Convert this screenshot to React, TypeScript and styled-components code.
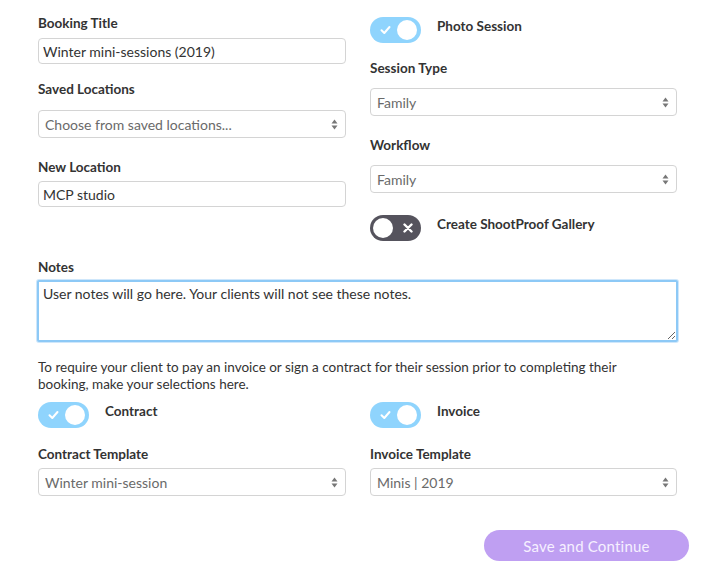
import React from "react";
import styled, { createGlobalStyle } from "styled-components";

const Global = createGlobalStyle`
  html, body { margin: 0; padding: 0; background: #fff; }
  body { font-family: Lato, "Open Sans", sans-serif; color: #333; }
  * { box-sizing: border-box; }
`;

const Page = styled.div`
  width: 715px;
  padding: 15px 38px 0 38px;
`;

const Columns = styled.div`
  display: grid;
  grid-template-columns: 308px 307px;
  column-gap: 24px;
`;

const Column = styled.div`
  display: flex;
  flex-direction: column;
`;

const Label = styled.div<{ $top?: number; $gap?: number }>`
  font-size: 13.5px;
  font-weight: 700;
  line-height: 16px;
  color: #333;
  margin-top: ${(p) => p.$top ?? 0}px;
  margin-bottom: ${(p) => p.$gap ?? 7}px;
`;

const TextInput = styled.input`
  width: 100%;
  height: 26px;
  border: 1px solid #d4d4d4;
  border-radius: 4px;
  padding: 0 4px;
  font-family: inherit;
  font-size: 14px;
  color: #333;
  outline: none;
  background: #fff;
`;

const SelectWrap = styled.div`
  position: relative;
  width: 100%;
`;

const Select = styled.select`
  width: 100%;
  height: 28px;
  appearance: none;
  -webkit-appearance: none;
  border: 1px solid #d4d4d4;
  border-radius: 4px;
  padding: 0 24px 0 6px;
  font-family: inherit;
  font-size: 14px;
  color: #6a6a6a;
  background: #fff;
  outline: none;
`;

const Arrows = styled.svg`
  position: absolute;
  right: 8px;
  top: 9px;
  pointer-events: none;
`;

const SelectBox = ({ value }: { value: string }) => (
  <SelectWrap>
    <Select defaultValue={value}>
      <option>{value}</option>
    </Select>
    <Arrows width="7" height="11" viewBox="0 0 7 11">
      <path d="M3.5 0.5 L6.5 4.5 H0.5 Z" fill="#777" />
      <path d="M3.5 10.5 L6.5 6.5 H0.5 Z" fill="#777" />
    </Arrows>
  </SelectWrap>
);

const ToggleRow = styled.div<{ $top?: number }>`
  display: flex;
  align-items: flex-start;
  gap: 16px;
  margin-top: ${(p) => p.$top ?? 0}px;
`;

const Track = styled.div<{ $on: boolean }>`
  position: relative;
  width: 51px;
  height: 26px;
  border-radius: 13px;
  background: ${(p) => (p.$on ? "#8fd4fd" : "#55535d")};
  flex: none;
`;

const Knob = styled.div<{ $on: boolean }>`
  position: absolute;
  top: 3px;
  left: ${(p) => (p.$on ? "27px" : "3px")};
  width: 20px;
  height: 20px;
  border-radius: 50%;
  background: #fff;
`;

const TrackIcon = styled.svg<{ $on: boolean }>`
  position: absolute;
  top: 8px;
  left: ${(p) => (p.$on ? "10px" : "33px")};
`;

const ToggleText = styled.div`
  font-size: 13.5px;
  font-weight: 700;
  line-height: 16px;
  padding-top: 1px;
  color: #333;
`;

const Toggle = ({ on, label, top }: { on: boolean; label: string; top?: number }) => (
  <ToggleRow $top={top}>
    <Track $on={on}>
      {on ? (
        <TrackIcon $on width="11" height="10" viewBox="0 0 11 10">
          <path d="M1.5 5.2 L4.3 8 L9.5 2" fill="none" stroke="#fff" strokeWidth="2" strokeLinecap="round" strokeLinejoin="round" />
        </TrackIcon>
      ) : (
        <TrackIcon $on={false} width="10" height="10" viewBox="0 0 10 10">
          <path d="M1.5 1.5 L8.5 8.5 M8.5 1.5 L1.5 8.5" stroke="#fff" strokeWidth="2.4" strokeLinecap="round" />
        </TrackIcon>
      )}
      <Knob $on={on} />
    </Track>
    <ToggleText>{label}</ToggleText>
  </ToggleRow>
);

const NotesArea = styled.textarea`
  display: block;
  width: 641px;
  margin-left: -1px;
  height: 62px;
  border: 2px solid #8dc9f6;
  box-shadow: 0 0 0 1px #cfe7fb;
  border-radius: 2px;
  padding: 3px 4px;
  font-family: inherit;
  font-size: 14px;
  color: #333;
  outline: none;
  resize: vertical;
`;

const Info = styled.p`
  margin: 17px 0 0 0;
  font-size: 13.5px;
  line-height: 17px;
  color: #333;
  width: 600px;
`;

const Footer = styled.div`
  display: flex;
  justify-content: flex-end;
  margin-top: 34px;
  margin-right: -12px;
`;

const SaveButton = styled.button`
  width: 205px;
  height: 31px;
  border: none;
  border-radius: 16px;
  background: #bf9ff2;
  color: #f6f0ff;
  font-family: inherit;
  font-size: 15px;
  letter-spacing: 0.2px;
`;

export default function App() {
  return (
    <Page>
      <Global />
      <Columns>
        <Column>
          <Label>Booking Title</Label>
          <TextInput defaultValue="Winter mini-sessions (2019)" />
          <Label $top={17} $gap={13}>Saved Locations</Label>
          <SelectBox value="Choose from saved locations..." />
          <Label $top={21} $gap={6}>New Location</Label>
          <TextInput defaultValue="MCP studio" />
        </Column>
        <Column>
          <Toggle on label="Photo Session" top={2} />
          <Label $top={17} $gap={12}>Session Type</Label>
          <SelectBox value="Family" />
          <Label $top={21} $gap={12}>Workflow</Label>
          <SelectBox value="Family" />
          <Toggle on={false} label="Create ShootProof Gallery" top={22} />
        </Column>
      </Columns>
      <Label $top={18} $gap={5}>Notes</Label>
      <NotesArea defaultValue="User notes will go here. Your clients will not see these notes." />
      <Info>
        To require your client to pay an invoice or sign a contract for their session prior to
        completing their booking, make your selections here.
      </Info>
      <Columns>
        <Column>
          <Toggle on label="Contract" top={9} />
          <Label $top={18} $gap={6}>Contract Template</Label>
          <SelectBox value="Winter mini-session" />
        </Column>
        <Column>
          <Toggle on label="Invoice" top={9} />
          <Label $top={18} $gap={6}>Invoice Template</Label>
          <SelectBox value="Minis | 2019" />
        </Column>
      </Columns>
      <Footer>
        <SaveButton>Save and Continue</SaveButton>
      </Footer>
    </Page>
  );
}
